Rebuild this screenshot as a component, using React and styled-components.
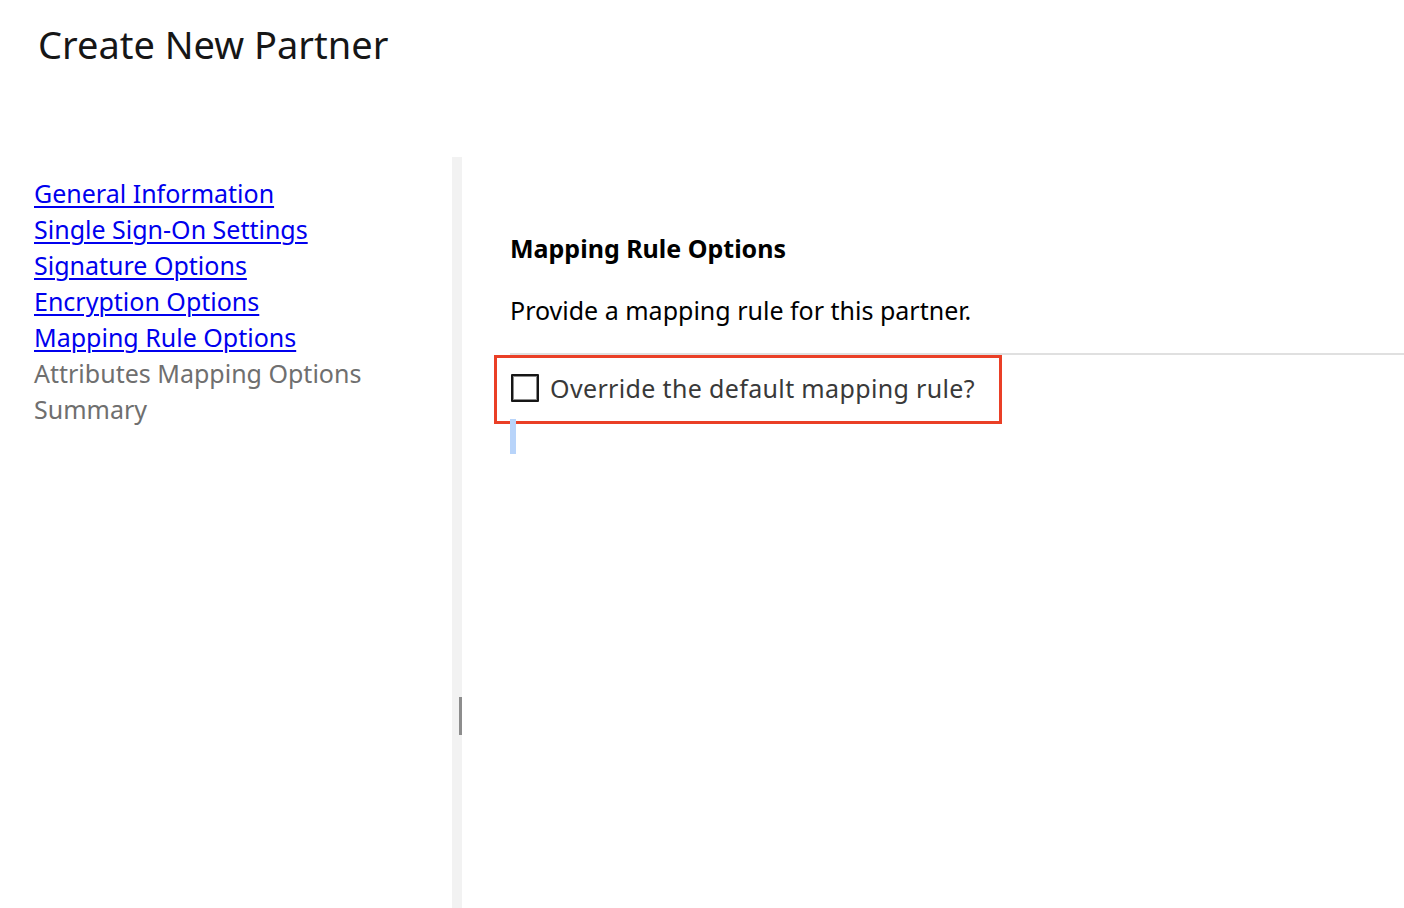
import React from 'react';
import styled, { createGlobalStyle } from 'styled-components';

const GlobalStyle = createGlobalStyle`
  html, body {
    margin: 0;
    padding: 0;
    background: #ffffff;
  }
  body {
    font-family: "Noto Sans", "Open Sans", sans-serif;
    color: #161616;
  }
`;

const Page = styled.div`
  display: flex;
  flex-direction: column;
  height: 908px;
  overflow: hidden;
`;

const Title = styled.h1`
  margin: 0;
  padding: 20px 0 0 38px;
  height: 157px;
  box-sizing: border-box;
  font-size: 38px;
  font-weight: 400;
  line-height: 48px;
  color: #161616;
`;

const Body = styled.div`
  display: flex;
  flex: 1;
  min-height: 0;
`;

const Sidebar = styled.nav`
  width: 452px;
  box-sizing: border-box;
  padding: 18px 0 0 34px;
  display: flex;
  flex-direction: column;
`;

const NavItem = styled.a`
  font-size: 25px;
  line-height: 36px;
  color: ${(p) => (p.$link ? '#0000ee' : '#6f6f6f')};
  text-decoration: ${(p) => (p.$link ? 'underline' : 'none')};
  text-underline-offset: 3px;
  text-decoration-thickness: 2px;
  width: fit-content;
  cursor: ${(p) => (p.$link ? 'pointer' : 'default')};
`;

const Splitter = styled.div`
  width: 10px;
  background: #f2f2f2;
  display: flex;
  flex-direction: column;
  align-items: flex-end;
  padding-top: 540px;
  box-sizing: border-box;
`;

const Handle = styled.div`
  width: 3px;
  height: 38px;
  background: #8d8d8d;
`;

const Content = styled.section`
  flex: 1;
  padding: 75px 0 0 48px;
  display: flex;
  flex-direction: column;
`;

const SectionTitle = styled.h2`
  margin: 0;
  font-size: 25px;
  font-weight: 700;
  line-height: 32px;
  color: #000000;
`;

const Description = styled.p`
  margin: 30px 0 0;
  font-size: 25px;
  line-height: 32px;
  color: #000000;
`;

const Divider = styled.hr`
  margin: 27px 0 0;
  border: none;
  height: 2px;
  background: #e0e0e0;
`;

const Highlight = styled.div`
  margin: 0 0 0 -16px;
  width: 508px;
  height: 69px;
  box-sizing: border-box;
  border: 3px solid #ea3f26;
  display: flex;
  align-items: center;
  padding: 0 0 4px 14px;
`;

const CheckLabel = styled.label`
  display: flex;
  align-items: center;
  gap: 11px;
  font-size: 25px;
  line-height: 32px;
  color: #393939;
  letter-spacing: 0.35px;
  cursor: pointer;
`;

const Box = styled.span`
  width: 28px;
  height: 28px;
  box-sizing: border-box;
  border: 2px solid #161616;
  border-radius: 1px;
  background: #ffffff;
  box-shadow: inset 0 0 0 1px #8d8d8d;
`;

const FocusBar = styled.div`
  margin-top: -5px;
  width: 6px;
  height: 35px;
  background: #b8d4fa;
`;

const links = [
  'General Information',
  'Single Sign-On Settings',
  'Signature Options',
  'Encryption Options',
  'Mapping Rule Options',
];

const plain = ['Attributes Mapping Options', 'Summary'];

export default function App() {
  return (
    <>
      <GlobalStyle />
      <Page>
        <Title>Create New Partner</Title>
        <Body>
          <Sidebar>
            {links.map((l) => (
              <NavItem key={l} href="#" $link>
                {l}
              </NavItem>
            ))}
            {plain.map((l) => (
              <NavItem key={l}>{l}</NavItem>
            ))}
          </Sidebar>
          <Splitter>
            <Handle />
          </Splitter>
          <Content>
            <SectionTitle>Mapping Rule Options</SectionTitle>
            <Description>Provide a mapping rule for this partner.</Description>
            <Divider />
            <Highlight>
              <CheckLabel>
                <Box />
                Override the default mapping rule?
              </CheckLabel>
            </Highlight>
            <FocusBar />
          </Content>
        </Body>
      </Page>
    </>
  );
}
